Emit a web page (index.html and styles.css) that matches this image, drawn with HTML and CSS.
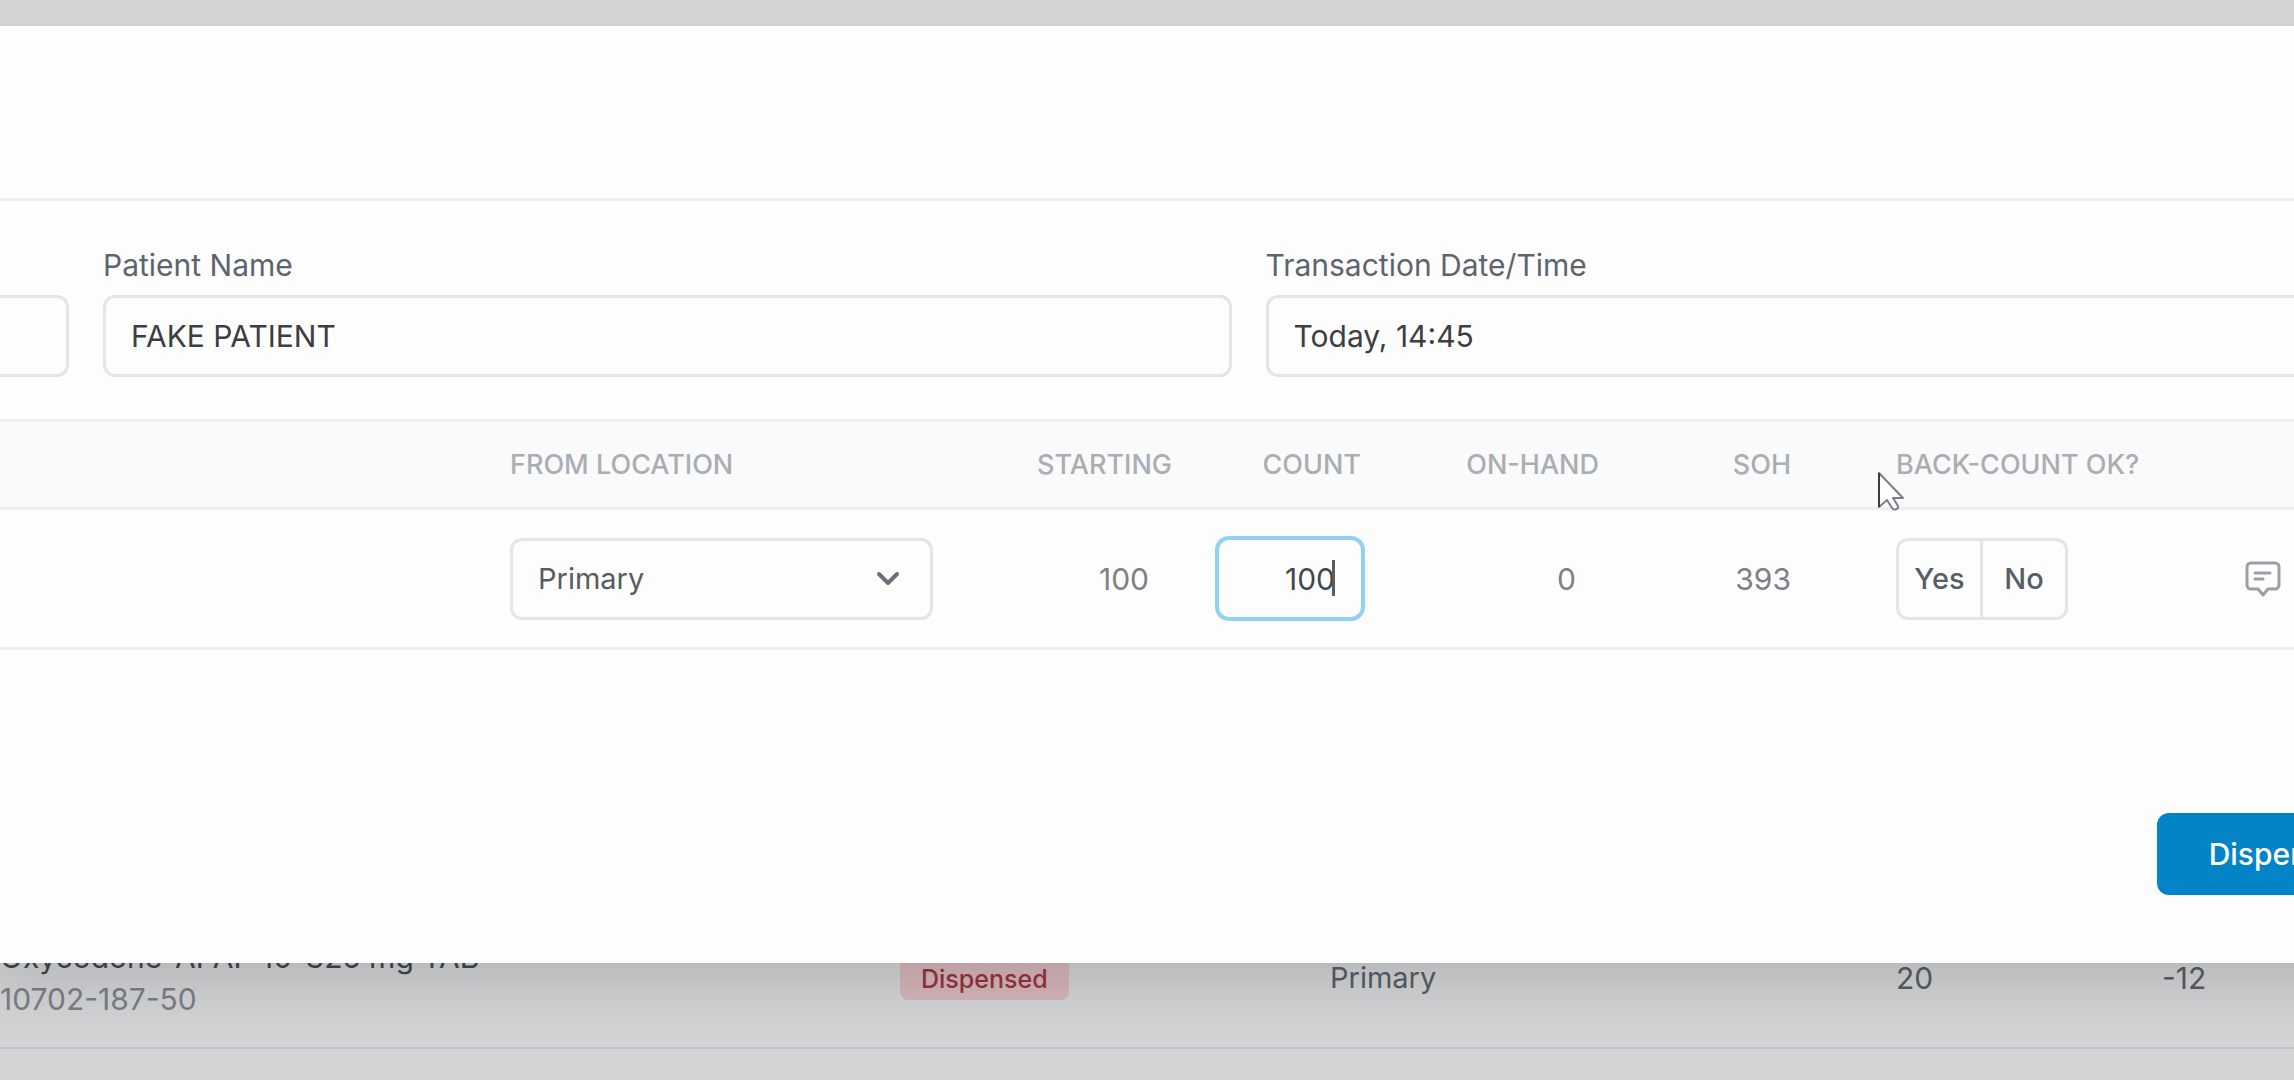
FILE: index.html
```html
<!DOCTYPE html>
<html lang="en">
<head>
  <meta charset="UTF-8">
  <title>Dispense</title>
  <link rel="stylesheet" href="styles.css">
</head>
<body>
  <!-- Transaction history behind the dialog -->
  <main class="history">
    <table class="history-table">
      <colgroup>
        <col class="h-drug">
        <col class="h-status">
        <col class="h-location">
        <col class="h-qty">
        <col>
      </colgroup>
      <tr>
        <td>
          <div class="drug-name">Oxycodone-APAP 10-325 mg TAB</div>
          <div class="drug-ndc">10702-187-50</div>
        </td>
        <td><span class="badge">Dispensed</span></td>
        <td class="location">Primary</td>
        <td>20</td>
        <td>-12</td>
      </tr>
    </table>
  </main>

  <!-- Dispense dialog -->
  <div class="modal" role="dialog" aria-label="Dispense">
    <div class="modal-header"></div>

    <form class="details">
      <div class="field field-first">
        <input type="text" aria-label="Prescription">
      </div>
      <div class="field">
        <label for="patientName">Patient Name</label>
        <input type="text" id="patientName" value="FAKE PATIENT">
      </div>
      <div class="field">
        <label for="dateTime">Transaction Date/Time</label>
        <input type="text" id="dateTime" value="Today, 14:45">
      </div>
    </form>

    <table class="items">
      <colgroup>
        <col class="c-item">
        <col class="c-from">
        <col class="c-starting">
        <col class="c-count">
        <col class="c-onhand">
        <col class="c-soh">
        <col class="c-back">
        <col>
      </colgroup>
      <thead>
        <tr>
          <th></th>
          <th>From Location</th>
          <th class="num">Starting</th>
          <th class="num count-head">Count</th>
          <th class="num">On-Hand</th>
          <th class="num">SOH</th>
          <th class="back">Back-Count OK?</th>
          <th></th>
        </tr>
      </thead>
      <tbody>
        <tr>
          <td></td>
          <td>
            <div class="select-wrap">
              <select aria-label="From location">
                <option>Primary</option>
              </select>
              <svg class="chevron" viewBox="0 0 24 16" fill="none" stroke="#6b7078" stroke-width="4" stroke-linecap="round" stroke-linejoin="round">
                <path d="M3 3l9 9 9-9"/>
              </svg>
            </div>
          </td>
          <td class="num indent">100</td>
          <td class="num">
            <div class="count-wrap">
              <input class="count" type="text" value="100" aria-label="Count">
              <span class="caret"></span>
            </div>
          </td>
          <td class="num indent">0</td>
          <td class="num">393</td>
          <td class="back">
            <div class="toggle">
              <button type="button">Yes</button>
              <button type="button">No</button>
            </div>
          </td>
          <td>
            <button class="note" type="button" aria-label="Add note">
              <svg viewBox="0 0 36 36" fill="none" stroke="#9b9fa5" stroke-width="3" stroke-linecap="round" stroke-linejoin="round">
                <path d="M6 2h24a4 4 0 0 1 4 4v18a4 4 0 0 1-4 4h-7l-5 6-5-6H6a4 4 0 0 1-4-4V6a4 4 0 0 1 4-4z"/>
                <path d="M10 12h15M10 18h8"/>
              </svg>
            </button>
          </td>
        </tr>
      </tbody>
    </table>

    <div class="modal-footer">
      <button class="primary" type="button">Dispense</button>
    </div>
  </div>

  <svg class="cursor" viewBox="0 0 26 40" fill="#fff" stroke="#7d7e88" stroke-width="2" stroke-linejoin="round">
    <path d="M1 1v34l8-7 5 8c2 3 7 1 6-2l-5-8h10z"/>
    <path d="M1 1v34" stroke="#3c3d4a"/>
  </svg>
</body>
</html>
```
FILE: styles.css
```css
* {
  box-sizing: border-box;
}
body {
  margin: 0;
  height: 100vh;
  overflow: hidden;
  position: relative;
  background: #d2d3d5;
  color: #585d66;
  font-family: Inter, "Liberation Sans", sans-serif;
  font-size: 30px;
  line-height: 42px;
}
input, select, button {
  font: inherit;
  color: inherit;
  margin: 0;
}
table {
  width: 100%;
  table-layout: fixed;
  border-collapse: collapse;
}
td, th {
  padding: 0;
  text-align: left;
  font-weight: 400;
}

/* history */
.history {
  padding-top: 908px;
}
.history-table td {
  height: 140px;
  border-bottom: 2px solid #bfc0c3;
}
.h-drug { width: 900px; }
.h-status { width: 430px; }
.h-location { width: 566px; }
.h-qty { width: 266px; }
.drug-name {
  color: #41454f;
}
.drug-ndc {
  color: #7b7e83;
}
.history-table .location {
  font-size: 29px;
}
.badge {
  display: inline-block;
  padding: 0 21px;
  border-radius: 8px;
  background: #d5b5b9;
  color: #93343c;
  font-size: 25px;
  font-weight: 500;
}

/* dialog */
.modal {
  position: absolute;
  top: 26px;
  left: -40px;
  right: -140px;
  background: #fdfdfd;
  box-shadow: 0 40px 60px -24px rgba(0, 0, 0, 0.16);
}
.modal-header {
  height: 175px;
  border-bottom: 3px solid #efeff0;
}
.details {
  display: flex;
  align-items: flex-end;
  gap: 34px;
  padding: 43px 40px 42px 0;
}
.field {
  flex: 1;
}
.field-first {
  flex: 0 0 109px;
}
.field label {
  display: block;
  margin-bottom: 9px;
  color: #5d646e;
}
.field input, .select-wrap select {
  display: block;
  width: 100%;
  height: 82px;
  padding: 0 25px;
  border: 3px solid #e4e5e7;
  border-radius: 12px;
  background: #fdfdfd;
  outline: none;
}
.field input {
  color: #3c3e42;
}

/* line items */
.c-item { width: 550px; }
.c-from { width: 423px; }
.c-starting { width: 239px; }
.c-count { width: 193px; }
.c-onhand { width: 234px; }
.c-soh { width: 192px; }
.c-back { width: 454px; }
.items th {
  height: 88px;
  border-top: 3px solid #efeff0;
  border-bottom: 3px solid #efeff0;
  background: #fafafb;
  color: #a9aeb4;
  font-size: 27px;
  font-weight: 500;
  text-transform: uppercase;
}
.items td {
  height: 140px;
  border-bottom: 3px solid #efeff0;
  color: #7d8086;
}
.items .num {
  text-align: right;
}
.items .count-head {
  padding-right: 4px;
}
.items .indent {
  padding-right: 23px;
}
.items .back {
  padding-left: 105px;
}
.select-wrap {
  position: relative;
  color: #585b61;
}
.select-wrap select {
  appearance: none;
  font-size: 29px;
}
.chevron {
  position: absolute;
  right: 33px;
  top: 33px;
  width: 24px;
  height: 16px;
}
.count-wrap {
  position: relative;
  margin-left: 43px;
}
.count {
  display: block;
  width: 100%;
  height: 85px;
  padding: 0 26px;
  border: 4px solid #8fd3f1;
  border-radius: 14px;
  background: #fdfdfd;
  color: #45474b;
  text-align: right;
  outline: none;
  caret-color: transparent;
}
.caret {
  position: absolute;
  right: 30px;
  top: 24px;
  width: 3px;
  height: 36px;
  background: #5a5c60;
}
.toggle {
  display: inline-flex;
  vertical-align: middle;
  border: 3px solid #e4e5e7;
  border-radius: 12px;
}
.toggle button {
  width: 81px;
  height: 76px;
  padding: 0;
  border: 0;
  background: none;
  color: #585d66;
  font-size: 29px;
  font-weight: 500;
}
.toggle button + button {
  width: 85px;
  border-left: 3px solid #e4e5e7;
}
.note {
  display: block;
  padding: 0;
  border: 0;
  background: none;
}
.note svg {
  display: block;
  width: 36px;
  height: 36px;
}
.modal-footer {
  display: flex;
  justify-content: flex-end;
  padding: 163px 40px 68px;
}
.primary {
  height: 82px;
  padding: 0 52px;
  border: 0;
  border-radius: 12px;
  background: #0284c7;
  color: #fff;
  font-weight: 500;
}
.cursor {
  position: absolute;
  left: 1878px;
  top: 472px;
  width: 26px;
  height: 40px;
}
```
